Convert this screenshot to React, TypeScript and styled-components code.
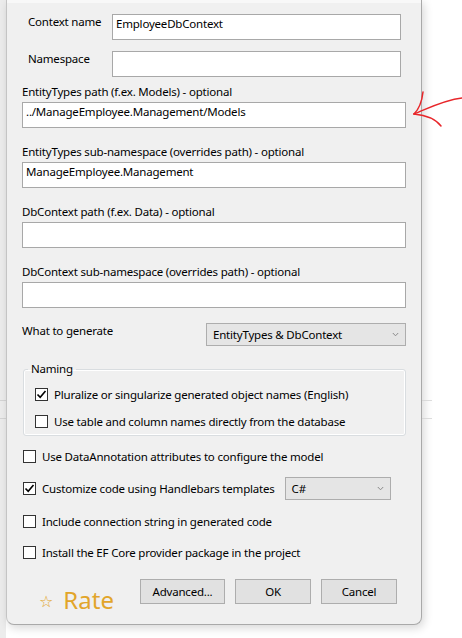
import React from "react";
import styled, { createGlobalStyle } from "styled-components";

const GlobalStyle = createGlobalStyle`
  body {
    margin: 0;
    background: #ffffff;
    font-family: "Noto Sans", "Open Sans", sans-serif;
    font-size: 11.5px;
    letter-spacing: -0.2px;
    color: #000000;
  }
`;

type CheckOptionProps = {
  label: string;
  checked?: boolean;
};

function CheckOption({ label, checked }: CheckOptionProps) {
  return (
    <CheckRow>
      <CheckBox>
        {checked && (
          <svg width="11" height="11" viewBox="0 0 11 11">
            <path d="M1.5 5.5 L4.2 8.3 L9.5 2" fill="none" stroke="#000" strokeWidth="1.6" />
          </svg>
        )}
      </CheckBox>
      <CheckLabel>{label}</CheckLabel>
    </CheckRow>
  );
}

function Chevron() {
  return (
    <svg width="7" height="5" viewBox="0 0 7 5">
      <path d="M0.8 1 L3.5 3.8 L6.2 1" fill="none" stroke="#8a8a8a" strokeWidth="1" />
    </svg>
  );
}

type SelectProps = {
  value: string;
  width: number;
};

function Select({ value, width }: SelectProps) {
  return (
    <SelectBox $width={width}>
      <span>{value}</span>
      <Chevron />
    </SelectBox>
  );
}

const pathFields = [
  { label: "EntityTypes path (f.ex. Models) - optional", value: "../ManageEmployee.Management/Models" },
  { label: "EntityTypes sub-namespace (overrides path) - optional", value: "ManageEmployee.Management" },
  { label: "DbContext path (f.ex. Data) - optional", value: "" },
  { label: "DbContext sub-namespace (overrides path) - optional", value: "" },
];

export default function App() {
  return (
    <Page>
      <GlobalStyle />
      <SideStrip />
      <Dialog>
        <TopEdge />
        <Body>
          <NameRow>
            <RowLabel>Context name</RowLabel>
            <TextBox $width={289}>EmployeeDbContext</TextBox>
          </NameRow>
          <NameRow $spaced>
            <RowLabel>Namespace</RowLabel>
            <TextBox $width={289} />
          </NameRow>

          {pathFields.map((field, i) => (
            <FieldGroup key={field.label} $first={i === 0}>
              <FieldLabel>{field.label}</FieldLabel>
              <TextBox>{field.value}</TextBox>
            </FieldGroup>
          ))}

          <GenerateRow>
            <GenerateLabel>What to generate</GenerateLabel>
            <Select value="EntityTypes & DbContext" width={200} />
          </GenerateRow>

          <NamingBox>
            <Legend>Naming</Legend>
            <CheckOption label="Pluralize or singularize generated object names (English)" checked />
            <CheckOption label="Use table and column names directly from the database" />
          </NamingBox>

          <OptionRow $top={10}>
            <CheckOption label="Use DataAnnotation attributes to configure the model" />
          </OptionRow>
          <OptionRow $top={11}>
            <CheckOption label="Customize code using Handlebars templates" checked />
            <TemplateSelect>
              <Select value="C#" width={106} />
            </TemplateSelect>
          </OptionRow>
          <OptionRow $top={11}>
            <CheckOption label="Include connection string in generated code" />
          </OptionRow>
          <OptionRow $top={11}>
            <CheckOption label="Install the EF Core provider package in the project" />
          </OptionRow>

          <Footer>
            <Rate>
              <Star>☆</Star>
              <span>Rate</span>
            </Rate>
            <Buttons>
              <Button $width={85}>Advanced...</Button>
              <Button $width={76}>OK</Button>
              <Button $width={76}>Cancel</Button>
            </Buttons>
          </Footer>
        </Body>
      </Dialog>
      <BackdropEdge />

      <Arrow width="58" height="46" viewBox="0 0 58 46">
        <g fill="none" stroke="#e8262a" strokeWidth="1.5" strokeLinecap="round">
          <path d="M10 30 C 25 24, 40 16, 58 14" />
          <path d="M19 8 C 18 17, 16 24, 10 30" />
          <path d="M10 30 C 20 31, 31 34, 37 42" />
        </g>
      </Arrow>
    </Page>
  );
}

const backdropLines = `
  linear-gradient(
    to bottom,
    transparent 400px,
    #d4d4d4 400px,
    #d4d4d4 401px,
    transparent 401px,
    transparent 418px,
    #d4d4d4 418px,
    #d4d4d4 419px,
    transparent 419px
  )
`;

const Page = styled.div`
  position: relative;
  width: 462px;
  height: 638px;
  display: flex;
  align-items: flex-start;
  overflow: hidden;
  background: #ffffff;
`;

const SideStrip = styled.div`
  width: 6px;
  height: 638px;
  flex-shrink: 0;
  background: ${backdropLines}, #ececec;
`;

const BackdropEdge = styled.div`
  width: 10px;
  height: 470px;
  flex-shrink: 0;
  background: ${backdropLines};
  opacity: 0.8;
`;

const Dialog = styled.div`
  width: 416px;
  height: 625px;
  box-sizing: border-box;
  flex-shrink: 0;
  display: flex;
  flex-direction: column;
  background: #f0f0f0;
  border-left: 1px solid #c4c4c4;
  border-right: 1px solid #a9a9a9;
  border-bottom: 1px solid #a9a9a9;
  border-radius: 0 0 8px 8px;
  box-shadow: 2px 3px 10px rgba(0, 0, 0, 0.16);
`;

const TopEdge = styled.div`
  height: 3px;
  background: #f8f8f8;
`;

const Body = styled.div`
  display: flex;
  flex-direction: column;
  padding: 11px 15px 0 15px;
`;

const NameRow = styled.div<{ $spaced?: boolean }>`
  display: flex;
  align-items: flex-start;
  padding-left: 6px;
  margin-top: ${(p) => (p.$spaced ? "11px" : "0")};
`;

const RowLabel = styled.div`
  width: 84px;
  line-height: 16px;
`;

const TextBox = styled.div<{ $width?: number }>`
  width: ${(p) => (p.$width ? `${p.$width}px` : "100%")};
  height: 26px;
  box-sizing: border-box;
  padding: 1px 3px 0 3px;
  line-height: 16px;
  background: #ffffff;
  border: 1px solid #a8a8a8;
  white-space: nowrap;
  overflow: hidden;
`;

const FieldGroup = styled.div<{ $first?: boolean }>`
  display: flex;
  flex-direction: column;
  margin-top: ${(p) => (p.$first ? "7px" : "16px")};
`;

const FieldLabel = styled.div`
  line-height: 16px;
  margin-bottom: 2px;
`;

const GenerateRow = styled.div`
  display: flex;
  align-items: flex-start;
  justify-content: space-between;
  margin-top: 15px;
`;

const GenerateLabel = styled.span`
  line-height: 16px;
`;

const SelectBox = styled.div<{ $width: number }>`
  width: ${(p) => p.$width}px;
  height: 23px;
  box-sizing: border-box;
  display: flex;
  align-items: center;
  justify-content: space-between;
  padding: 0 6px 0 6px;
  background: #e5e5e5;
  border: 1px solid #adadad;
  white-space: nowrap;
`;

const NamingBox = styled.fieldset`
  margin: 15px 0 0 1px;
  padding: 7px 10px 4px 11px;
  min-width: 0;
  display: flex;
  flex-direction: column;
  gap: 7px;
  border: 1px solid #d9dde0;
  border-radius: 3px;
  box-shadow: inset 0 0 0 1px #ffffff;
`;

const Legend = styled.legend`
  margin-left: -7px;
  padding: 0 3px;
  line-height: 16px;
`;

const CheckRow = styled.div`
  display: flex;
  align-items: center;
  height: 20px;
`;

const CheckBox = styled.div`
  width: 13px;
  height: 13px;
  box-sizing: border-box;
  flex-shrink: 0;
  margin-right: 6px;
  display: flex;
  align-items: center;
  justify-content: center;
  background: #ffffff;
  border: 1px solid #333333;
`;

const CheckLabel = styled.span`
  white-space: nowrap;
`;

const OptionRow = styled.div<{ $top: number }>`
  display: flex;
  align-items: center;
  min-height: 20px;
  margin: ${(p) => p.$top}px 0 0 1px;
`;

const TemplateSelect = styled.div`
  margin-left: 10px;
`;

const Footer = styled.div`
  display: flex;
  align-items: flex-start;
  margin-top: 17px;
`;

const Rate = styled.div`
  display: flex;
  align-items: center;
  gap: 10px;
  margin: 6px 0 0 17px;
  height: 30px;
  color: #e2a52a;
  font-size: 24px;
  letter-spacing: 0;
  line-height: 30px;
`;

const Star = styled.span`
  font-family: "DejaVu Sans", sans-serif;
  font-size: 16px;
  line-height: 16px;
  margin-top: 4px;
`;

const Buttons = styled.div`
  display: flex;
  gap: 10px;
  margin: 0 9px 0 auto;
`;

const Button = styled.button<{ $width: number }>`
  width: ${(p) => p.$width}px;
  height: 25px;
  padding: 0;
  font-family: inherit;
  font-size: 11.5px;
  letter-spacing: -0.2px;
  color: #000000;
  background: #e1e1e1;
  border: 1px solid #adadad;
  border-radius: 0;
`;

const Arrow = styled.svg`
  position: absolute;
  left: 404px;
  top: 84px;
`;
